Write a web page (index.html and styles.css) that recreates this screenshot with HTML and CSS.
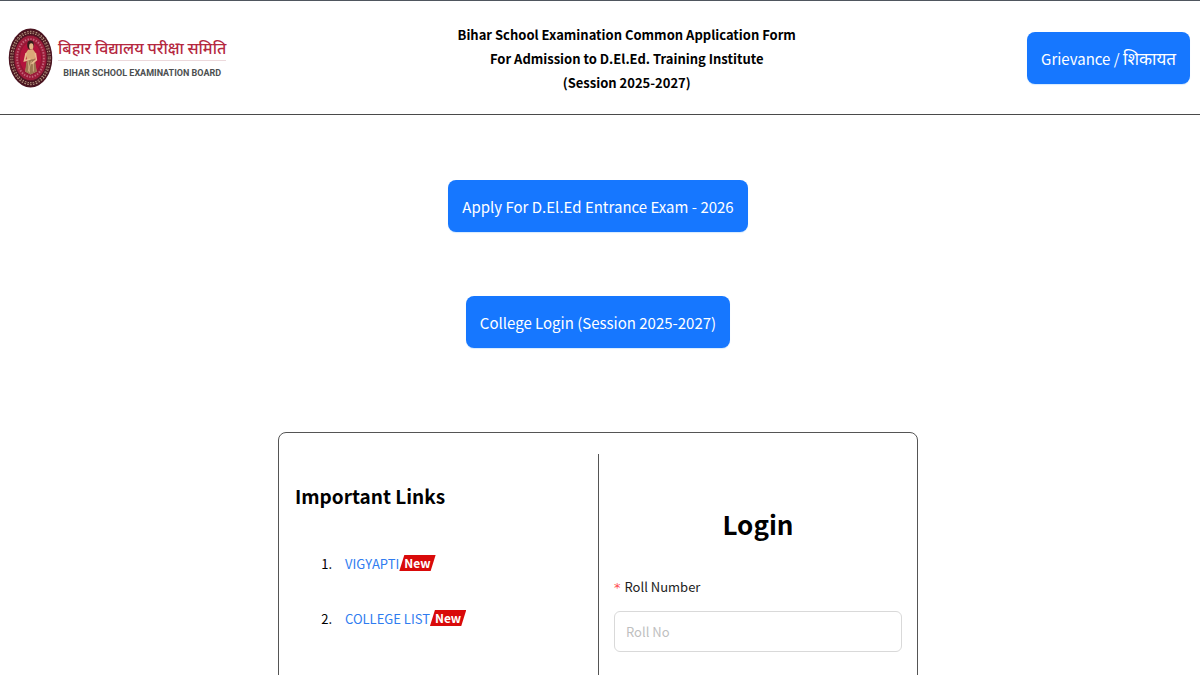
FILE: index.html
```html
<!DOCTYPE html>
<html lang="en">
<head>
<meta charset="utf-8">
<meta name="viewport" content="width=device-width, initial-scale=1">
<title>Bihar School Examination Board</title>
<link rel="stylesheet" href="styles.css">
</head>
<body>
<header class="header">
  <div class="brand">
    <svg class="seal" viewBox="0 0 46 62" aria-hidden="true">
      <ellipse cx="23" cy="31" rx="22.5" ry="30.5" fill="#4a1420"/>
      <ellipse cx="23" cy="31" rx="19.3" ry="26.5" fill="none" stroke="#b08f7c" stroke-width="3.2" stroke-dasharray="1.6 1.3"/>
      <ellipse cx="23" cy="31" rx="19.3" ry="26.5" fill="none" stroke="#5b2a2c" stroke-width="1"/>
      <ellipse cx="23" cy="31" rx="17" ry="23.5" fill="#9c1c3a" stroke="#5e1526" stroke-width="1"/>
      <ellipse cx="23" cy="31" rx="13.8" ry="19.5" fill="none" stroke="#c2657a" stroke-width="2" stroke-dasharray="1.5 1.4"/>
      <ellipse cx="23" cy="31" rx="11.5" ry="16.5" fill="#b3143c" stroke="#8c1733" stroke-width="1"/>
      <path d="M18 26 20.5 22.5 25.5 22 28.5 26 27 34 29.5 45 23 48 17.5 45 19.5 34Z" fill="#dba878"/>
      <path d="M19 33 27.5 32 29.5 45 23 48 17.5 45Z" fill="#9c7651"/>
      <path d="M18.5 26 16.8 34 23 32M28 26 29 33 24 37" fill="none" stroke="#eabb90" stroke-width="1.7"/>
      <ellipse cx="23" cy="17.5" rx="3.4" ry="4.6" fill="#341b1b"/>
      <ellipse cx="23.8" cy="19" rx="2.2" ry="3.2" fill="#e5b487"/>
      <path d="M20.5 34 22 46M24 34 20.5 45M26 34 26 45" stroke="#e1c093" stroke-width=".7"/>
    </svg>
    <div class="brand-text">
      <span class="brand-hindi" lang="hi">बिहार विद्यालय परीक्षा समिति</span>
      <span class="brand-english">BIHAR SCHOOL EXAMINATION BOARD</span>
    </div>
  </div>
  <h1 class="title">Bihar School Examination Common Application Form<br>For Admission to D.El.Ed. Training Institute<br>(Session 2025-2027)</h1>
  <button class="button" type="button">Grievance / <span class="button-hindi" lang="hi">शिकायत</span></button>
</header>
<main class="main">
  <div class="actions">
    <button class="button" type="button">Apply For D.El.Ed Entrance Exam - 2026</button>
    <button class="button" type="button">College Login (Session 2025-2027)</button>
  </div>
  <div class="card">
    <section class="links">
      <h2 class="links-title">Important Links</h2>
      <ol class="link-list">
        <li class="link-item"><a class="link" href="#">VIGYAPTI</a><span class="new">New</span></li>
        <li class="link-item"><a class="link" href="#">COLLEGE LIST</a><span class="new">New</span></li>
      </ol>
    </section>
    <section class="login">
      <h2 class="login-title">Login</h2>
      <form class="form">
        <label class="label" for="roll"><span class="required">*</span>Roll Number</label>
        <input class="input" id="roll" type="text" placeholder="Roll No">
      </form>
    </section>
  </div>
</main>
</body>
</html>
```
FILE: styles.css
```css
* { box-sizing: border-box; }

body {
  margin: 0;
  background: #fff;
  color: #000;
  font-family: "Noto Sans CJK SC", "Noto Sans", sans-serif;
  font-size: 13px;
  line-height: 24px;
}

h1, h2 { margin: 0; }

.header {
  display: flex;
  align-items: center;
  justify-content: space-between;
  min-height: 115px;
  padding-right: 10px;
  border-top: 1px solid #4f565e;
  border-bottom: 1px solid #4a4a4a;
}

.brand {
  display: flex;
  align-items: center;
  gap: 5px;
  padding-left: 8px;
}

.seal { width: 45px; height: 60px; }

.brand-text {
  display: flex;
  flex-direction: column;
  padding-top: 4px;
  white-space: nowrap;
}

.brand-hindi {
  color: #b5283f;
  font-size: 16px;
  font-weight: 500;
  line-height: 26px;
  border-bottom: 1px solid #ecd9dc;
}

.brand-english {
  color: #4c4f50;
  font-family: Roboto, sans-serif;
  font-size: 9px;
  font-weight: 700;
  line-height: 24px;
  text-align: center;
}

.title {
  padding-top: 2px;
  font-size: 13px;
  font-weight: 700;
  line-height: 24px;
  text-align: center;
}

.button {
  min-height: 52px;
  padding: 0 14px;
  border: 0;
  border-radius: 8px;
  background: #1677ff;
  color: #fff;
  font-family: inherit;
  font-size: 15px;
  box-shadow: 0 1px 1px #d5eaff;
  cursor: pointer;
}

.button-hindi { font-size: 17px; }

.main { padding: 65px 4px 0 0; }

.actions {
  display: flex;
  flex-direction: column;
  align-items: center;
  gap: 64px;
}

.card {
  display: grid;
  grid-template-columns: 1fr 1fr;
  max-width: 640px;
  min-height: 420px;
  margin: 84px auto 0;
  padding: 21px 0;
  border: 1px solid #555;
  border-radius: 8px;
}

.links { padding: 24px 16px; }

.links-title { font-size: 19px; line-height: 36px; }

.link-list {
  display: flex;
  flex-direction: column;
  gap: 31px;
  margin: 38px 0 0;
  padding-left: 50px;
}

.link-item::marker { content: counter(list-item) ".\2003"; }

.link { color: #2f7cf0; text-decoration: none; }

.new {
  display: inline-block;
  padding: 0 5px;
  background: #d90a0a;
  clip-path: polygon(5px 0, 100% 0, calc(100% - 5px) 100%, 0 100%);
  color: #fff;
  font-size: 12px;
  font-weight: 700;
  line-height: 16px;
  vertical-align: 1px;
}

.login { padding: 46px 15px; border-left: 1px solid #555; }

.login-title { font-size: 26px; line-height: 48px; text-align: center; }

.form { display: flex; flex-direction: column; gap: 11px; margin-top: 27px; }

.label { color: #222; }

.required {
  margin-right: 4px;
  color: #ff4d4f;
  font-family: "DejaVu Sans", sans-serif;
}

.input {
  width: 100%;
  height: 41px;
  padding: 0 11px;
  border: 1px solid #d9d9d9;
  border-radius: 6px;
  font-family: inherit;
  font-size: 13px;
}

.input::placeholder { color: #bfbfbf; }
```
